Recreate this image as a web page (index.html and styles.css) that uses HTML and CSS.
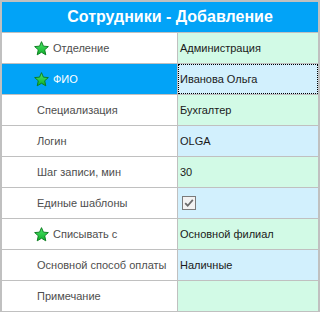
FILE: index.html
```html
<!DOCTYPE html>
<html>
<head>
<meta charset="utf-8">
<link rel="stylesheet" href="styles.css">
</head>
<body>
<div class="panel">
  <div class="title">Сотрудники - Добавление</div>
  <div class="row">
    <div class="label star-label"><svg class="star" viewBox="0 0 14 14"><defs><linearGradient id="g1" x1="0" y1="0" x2="0" y2="1"><stop offset="0" stop-color="#4ee86a"/><stop offset="1" stop-color="#0fae2a"/></linearGradient></defs><path d="M7 0.6 L8.8 4.8 L13.4 5.2 L10 8.2 L11 12.9 L7 10.5 L3 12.9 L4 8.2 L0.6 5.2 L5.2 4.8 Z" fill="url(#g1)" stroke="#0b7d1f" stroke-width="0.9" stroke-linejoin="round"/></svg><span>Отделение</span></div>
    <div class="value green">Администрация</div>
  </div>
  <div class="row selected">
    <div class="label star-label"><svg class="star" viewBox="0 0 14 14"><path d="M7 0.6 L8.8 4.8 L13.4 5.2 L10 8.2 L11 12.9 L7 10.5 L3 12.9 L4 8.2 L0.6 5.2 L5.2 4.8 Z" fill="url(#g1)" stroke="#0b7d1f" stroke-width="0.9" stroke-linejoin="round"/></svg><span>ФИО</span></div>
    <div class="value blue focus">Иванова Ольга</div>
  </div>
  <div class="row">
    <div class="label">Специализация</div>
    <div class="value green">Бухгалтер</div>
  </div>
  <div class="row">
    <div class="label">Логин</div>
    <div class="value blue">OLGA</div>
  </div>
  <div class="row">
    <div class="label">Шаг записи, мин</div>
    <div class="value green">30</div>
  </div>
  <div class="row">
    <div class="label">Единые шаблоны</div>
    <div class="value blue"><span class="check"><svg viewBox="0 0 11 11"><path d="M2 5.6 L4.3 8 L9 2.6" fill="none" stroke="#6a6a6a" stroke-width="1.6"/></svg></span></div>
  </div>
  <div class="row">
    <div class="label star-label"><svg class="star" viewBox="0 0 14 14"><path d="M7 0.6 L8.8 4.8 L13.4 5.2 L10 8.2 L11 12.9 L7 10.5 L3 12.9 L4 8.2 L0.6 5.2 L5.2 4.8 Z" fill="url(#g1)" stroke="#0b7d1f" stroke-width="0.9" stroke-linejoin="round"/></svg><span>Списывать с</span></div>
    <div class="value green">Основной филиал</div>
  </div>
  <div class="row">
    <div class="label">Основной способ оплаты</div>
    <div class="value blue">Наличные</div>
  </div>
  <div class="row">
    <div class="label">Примечание</div>
    <div class="value green"></div>
  </div>
</div>
</body>
</html>
```

FILE: styles.css
```css
html, body {
  margin: 0;
  padding: 0;
  background: #ffffff;
}
.panel {
  width: 320px;
  height: 312px;
  box-sizing: border-box;
  border-top: 2px solid #c0c0c0;
  border-left: 2px solid #c0c0c0;
  border-right: 2px solid #c0c0c0;
  font-family: "Liberation Sans", Arial, sans-serif;
  font-size: 11px;
}
.title {
  height: 30px;
  padding-left: 20px;
  background: #02a3f7;
  color: #ffffff;
  font-weight: bold;
  font-size: 16px;
  display: flex;
  align-items: center;
  justify-content: center;
  border-bottom: 1px solid #c0c0c0;
}
.row {
  display: grid;
  grid-template-columns: 176px 1fr;
  height: 31px;
  box-sizing: border-box;
  border-bottom: 1px solid #c0c0c0;
}
.label {
  display: flex;
  align-items: center;
  padding-left: 35px;
  color: #4e4e4e;
  background: #ffffff;
  border-right: 1px solid #c0c0c0;
}
.star-label {
  padding-left: 32px;
  gap: 4px;
}
.star {
  width: 15px;
  height: 15px;
  flex: none;
}
.selected .label {
  background: #02a3f7;
  color: #ffffff;
}
.value {
  display: flex;
  align-items: center;
  padding-left: 2px;
  color: #1a1a1a;
  box-sizing: border-box;
}
.green {
  background: #d2fae6;
}
.blue {
  background: #d2f0fd;
}
.focus {
  outline: 1px dotted #000000;
  outline-offset: -1px;
}
.check {
  width: 12px;
  height: 12px;
  margin-left: 2px;
  border: 1px solid #7a7a7a;
  background: #f2f2f2;
  display: flex;
}
.check svg {
  width: 12px;
  height: 12px;
}
```
